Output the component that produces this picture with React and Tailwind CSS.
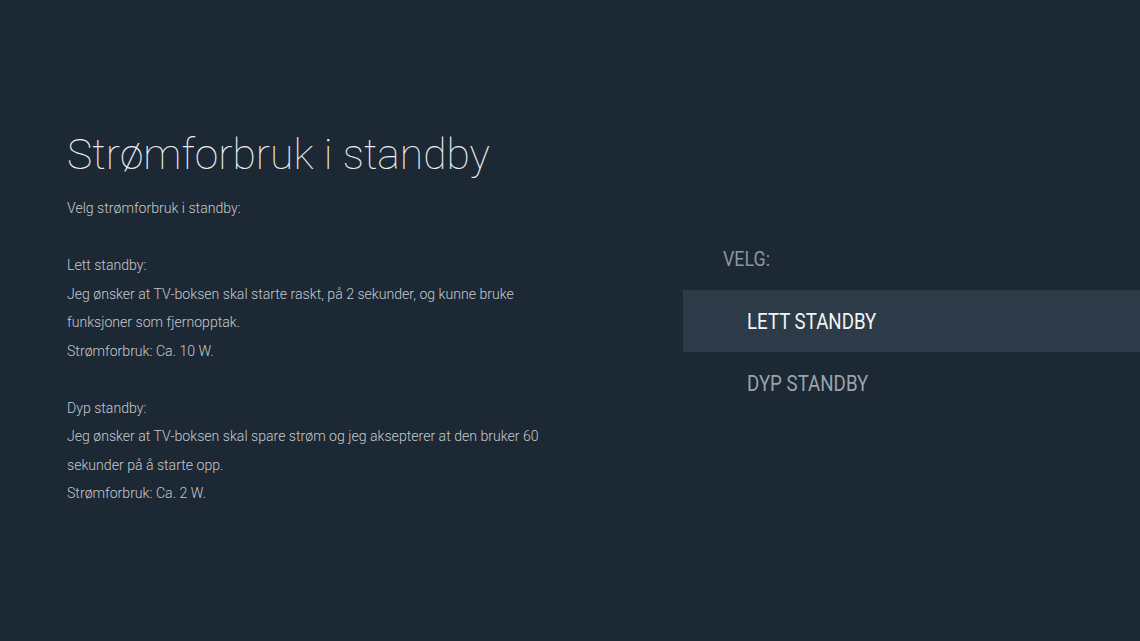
export default function App() {
  return (
    <div className="w-[1140px] h-[641px] bg-[#1c2834] flex overflow-hidden" style={{ fontFamily: "Roboto, 'Liberation Sans', sans-serif" }}>
      <div className="w-[683px] pl-[67px] pt-[126px]">
        <h1 className="text-[42.6px] font-thin text-[#eceef0] leading-[56px]">Strømforbruk i standby</h1>
        <div className="mt-[12px] text-[14.1px] font-light text-[#c5cacf] leading-[28.5px]">
          <p>Velg strømforbruk i standby:</p>
          <p>&nbsp;</p>
          <p>Lett standby:</p>
          <p>Jeg ønsker at TV-boksen skal starte raskt, på 2 sekunder, og kunne bruke</p>
          <p>funksjoner som fjernopptak.</p>
          <p>Strømforbruk: Ca. 10 W.</p>
          <p>&nbsp;</p>
          <p>Dyp standby:</p>
          <p>Jeg ønsker at TV-boksen skal spare strøm og jeg aksepterer at den bruker 60</p>
          <p>sekunder på å starte opp.</p>
          <p>Strømforbruk: Ca. 2 W.</p>
        </div>
      </div>
      <div className="flex-1 pt-[229px]">
        <div className="h-[61px] flex items-center pl-[40px] text-[21px] text-[#8c96a0]">
          <span className="inline-block origin-left scale-x-[0.85]">VELG:</span>
        </div>
        <div className="h-[62px] flex items-center pl-[64px] bg-[#2d3b48] text-[22px] text-[#f2f4f5]">
          <span className="inline-block origin-left scale-x-[0.85]">LETT STANDBY</span>
        </div>
        <div className="h-[62px] flex items-center pl-[64px] text-[22px] text-[#9aa3ac]">
          <span className="inline-block origin-left scale-x-[0.85]">DYP STANDBY</span>
        </div>
      </div>
    </div>
  );
}
